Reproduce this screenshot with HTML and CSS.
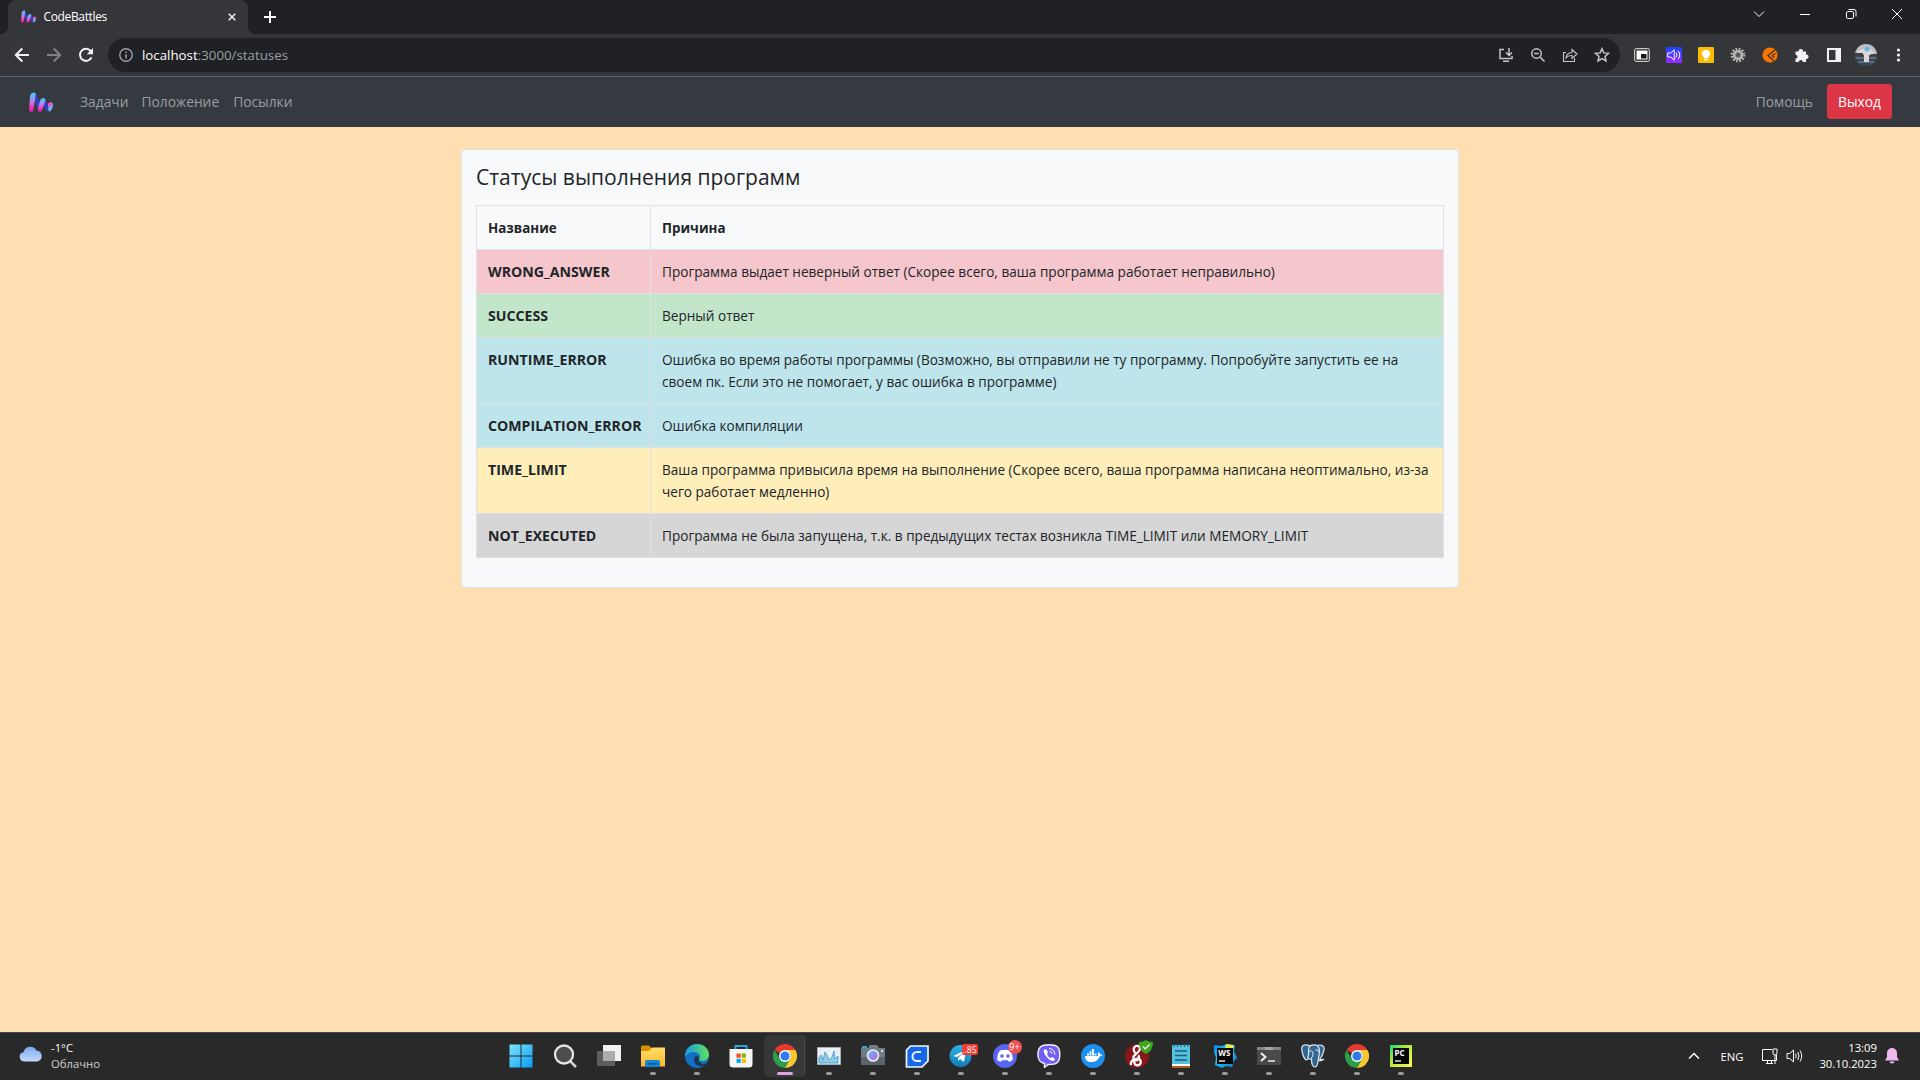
FILE: index.html
```html
<!DOCTYPE html>
<html lang="ru">
<head>
<meta charset="utf-8">
<title>CodeBattles</title>
<link rel="stylesheet" href="styles.css">
</head>
<body>
<svg class="defs" width="0" height="0">
  <defs>
    <linearGradient id="up" x1="0" y1="0" x2="0" y2="1"><stop offset="0" stop-color="#3fc6f5"/><stop offset=".5" stop-color="#c47fe0"/><stop offset=".85" stop-color="#ff1fb4"/></linearGradient>
    <linearGradient id="win" x1="0" y1="0" x2="1" y2="1"><stop offset="0" stop-color="#7be6ff"/><stop offset="1" stop-color="#0a9bf5"/></linearGradient>
    <linearGradient id="edge" x1="0" y1="0" x2="1" y2="0"><stop offset="0" stop-color="#1b9de2"/><stop offset="1" stop-color="#5fe05c"/></linearGradient>
    <linearGradient id="folder" x1="0" y1="0" x2="0" y2="1"><stop offset="0" stop-color="#ffdf6b"/><stop offset="1" stop-color="#fbb928"/></linearGradient>
    <linearGradient id="cloud" x1="0" y1="0" x2="0" y2="1"><stop offset="0" stop-color="#76a7f2"/><stop offset="1" stop-color="#c7dafa"/></linearGradient>
    <linearGradient id="lens" x1="0" y1="0" x2="1" y2="1"><stop offset="0" stop-color="#5ec3f5"/><stop offset="1" stop-color="#c65be8"/></linearGradient>
    <linearGradient id="tg" x1="0" y1="0" x2="0" y2="1"><stop offset="0" stop-color="#31b0e6"/><stop offset="1" stop-color="#127cb5"/></linearGradient>
    <linearGradient id="sound" x1="0" y1="0" x2="0" y2="1"><stop offset="0" stop-color="#1546ff"/><stop offset="1" stop-color="#9a2bff"/></linearGradient>
    <linearGradient id="ws" x1="0" y1="0" x2="1" y2="1"><stop offset="0" stop-color="#0a7ce8"/><stop offset=".35" stop-color="#18c8f0"/><stop offset="1" stop-color="#087ddb"/></linearGradient>
    <linearGradient id="pc" x1="0" y1="0" x2="1" y2="1"><stop offset="0" stop-color="#19d97c"/><stop offset=".4" stop-color="#b5e83c"/><stop offset="1" stop-color="#fcf84a"/></linearGradient>
    <symbol id="logo" viewBox="0 0 24 20">
      <path d="M5.500 3 10 15" stroke="#3440c4" stroke-width="4" stroke-linecap="round"/>
      <path d="M14.500 8 18.500 17" stroke="#3440c4" stroke-width="4" stroke-linecap="round"/>
      <path d="M4.800 0.400C2.500 0.600 1.300 2.200 1 4.600L.1 17.400c0 3 4 3 4.300 0L6.700 3.200C7 1.400 6.300.4 4.800.4Z" fill="url(#up)"/>
      <path d="M14.500 6c-2 .2-3.200 1.500-3.700 3.400L8.900 17c-.4 3 3.400 3.700 4.400.8L16.200 9c.5-1.700-.3-3-1.700-3Z" fill="url(#up)"/>
      <path d="M21.500 10.500c-1.700 0-2.500 1.300-2.500 3L19.500 19c1 .8 1.800.3 2.500-.5 1.600-1.800 2-4 2-6 0-1.400-1.200-2-2.500-2Z" fill="#69b4ee"/>
      <path d="M21.500 10.500c-1.700 0-2.500 1.300-2.500 3l.3 2.500 4.300-3.500c.2-1.400-.9-2-2.100-2Z" fill="#f04fc0"/>
    </symbol>
    <symbol id="chrome" viewBox="0 0 24 24">
      <path d="M12 12 1.600 6A12 12 0 0 1 22.400 6L12 6Z" fill="#e53a2e"/>
      <path d="M1.600 6A12 12 0 0 0 12 24l5.200-9L12 12 6.800 15Z" fill="#2b9e4a"/>
      <path d="M22.400 6A12 12 0 0 1 12 24l5.200-9A6 6 0 0 0 17.200 9L12 6Z" fill="#fcc72c"/>
      <circle cx="12" cy="12" r="6" fill="#fff"/><circle cx="12" cy="12" r="4.600" fill="#2f7de9"/>
    </symbol>
  </defs>
</svg>

<div class="tabstrip">
  <div class="tab">
    <svg class="favicon" width="15" height="13"><use href="#logo"/></svg>
    <span class="tab-title">CodeBattles</span>
    <svg width="8" height="8" viewBox="0 0 8 8"><path d="M.7.7 7.300 7.300M7.300.7.7 7.300" stroke="#e8eaed" stroke-width="1.600"/></svg>
  </div>
  <svg class="newtab" width="12" height="12" viewBox="0 0 12 12"><path d="M6 0v12M0 6h12" stroke="#fff" stroke-width="2"/></svg>
  <div class="window-controls">
    <svg viewBox="0 0 12 12"><path d="M1 3.500 6 8.500 11 3.500" class="thin"/></svg>
    <svg viewBox="0 0 12 12"><path d="M1 6.500h10" class="thin"/></svg>
    <svg viewBox="0 0 12 12"><rect x="1.500" y="3.500" width="7" height="7" rx="1.300" class="thin"/><path d="M3.500 1.500h5.500a2 2 0 0 1 2 2v5" class="thin"/></svg>
    <svg viewBox="0 0 12 12"><path d="M1 1 11 11M11 1 1 11" class="thin"/></svg>
  </div>
</div>

<div class="toolbar">
  <div class="nav-buttons">
    <svg viewBox="0 0 16 16"><path d="M15 8H2M8.300 1.500 1.800 8l6.500 6.500" class="arrow"/></svg>
    <svg viewBox="0 0 16 16"><path d="M1 8h13M7.700 1.500 14.200 8l-6.500 6.500" class="arrow off"/></svg>
    <svg viewBox="0 0 16 16"><path d="M13.500 10.300A6 6 0 1 1 12.600 4" class="arrow"/><path d="M15 1v6.200H8.800Z" fill="#f1f3f4"/></svg>
  </div>
  <div class="omnibox">
    <svg class="info" width="14" height="14" viewBox="0 0 14 14"><circle cx="7" cy="7" r="6.200" fill="none" stroke="#9aa0a6" stroke-width="1.400"/><path d="M7 6.200v4.300M7 3.500v1.500" stroke="#9aa0a6" stroke-width="1.500"/></svg>
    <span class="url"><b>localhost</b>:3000/statuses</span>
    <div class="omni-icons">
      <svg viewBox="0 0 16 16" class="line"><path d="M6 2.500H2v9h12V9M5 14.200h6M11 1v7M8 5.500l3 3 3-3"/></svg>
      <svg viewBox="0 0 16 16" class="line"><circle cx="6.500" cy="6.500" r="4.700"/><path d="m10 10 4.500 4.500M4.300 6.500h4.400"/></svg>
      <svg viewBox="0 0 16 16" class="line thinner"><path d="M4 5.500H1.500v9h11V11M4 11c.3-3.500 2.500-5.300 6-5.500V2.500l5 4.500-5 4.500V8.500C7.500 8.300 5.500 9 4 11Z"/></svg>
      <svg viewBox="0 0 16 16" class="line"><path d="m8 1.700 1.800 4.200 4.700.4-3.500 3.100 1 4.600L8 11.600 4 14l1-4.600L1.500 6.300l4.700-.4Z"/></svg>
    </div>
  </div>
  <div class="extensions">
    <svg viewBox="0 0 16 16"><rect x=".7" y="1.700" width="14.600" height="12.600" rx="1.500" fill="#222" stroke="#eee" stroke-width="1"/><rect x="2.500" y="3.500" width="11" height="9" fill="#fff"/><rect x="7" y="7" width="5.500" height="4.500" fill="#17181a"/></svg>
    <svg viewBox="0 0 16 16"><rect width="16" height="16" rx="1" fill="url(#sound)"/><path d="M1.700 6h3l3.500-3.200v10.400L4.700 10h-3ZM10 5.500q2 2.500 0 5M12 3.800q3.500 4.200 0 8.400" fill="none" stroke="#fff"/></svg>
    <svg viewBox="0 0 16 16"><rect width="16" height="16" rx="1.300" fill="#fbbc04"/><path d="M8 2.700a4 4 0 0 0-2.300 7.300v1.200h4.600V10A4 4 0 0 0 8 2.700ZM6 12h4v1.300H6Z" fill="#fff"/></svg>
    <svg viewBox="0 0 16 16"><circle cx="8" cy="8" r="6.300" fill="none" stroke="#bbb" stroke-width="2.200" stroke-dasharray="1.650 1.650"/><circle cx="8" cy="8" r="4" fill="#777" stroke="#b4b4b4" stroke-width="2.500"/><circle cx="8" cy="8" r="2" fill="#555"/></svg>
    <svg viewBox="0 0 16 16"><circle cx="8" cy="8" r="7.600" fill="#fb7400"/><path d="M13.500 2.500 6 8.500 12 14M10 8.500l3.500-2M10 8.500l2.300 2" fill="none" stroke="#3b302b" stroke-width="1.200"/></svg>
    <svg viewBox="0 0 16 16"><path d="M1.500 4.500h3.200a2.100 2.100 0 1 1 4.100 0H12v3.200a2.100 2.100 0 1 1 0 4.100V15H8.800a2 2 0 1 0-4 0H1.500v-3.300a2 2 0 1 0 0-4Z" fill="#f1f3f4"/></svg>
    <svg viewBox="0 0 16 16"><path d="M1 1h14v14H1ZM3 3v10h6.500V3Z" fill="#f1f3f4" fill-rule="evenodd"/></svg>
    <svg class="avatar" viewBox="0 0 22 22"><clipPath id="av"><circle cx="11" cy="11" r="11"/></clipPath><g clip-path="url(#av)"><path fill="#bfbfc1" d="M0 0h22v11H0z"/><path fill="#394758" d="M0 11h22v11H0z"/><path d="M0 14h22M0 18h22" stroke="#8992a5"/><path d="M3 7q8-5 16 1l-1 3-4-1v8H9v-8l-6-1Z" fill="#ded5dc"/><circle cx="12" cy="5" r="2.500" fill="#5db9e7"/><path d="M0 9h8v3H0ZM16 10h6v2h-6Z" fill="#443f43"/></g></svg>
    <svg viewBox="0 0 16 16" fill="#f1f3f4"><circle cx="8.500" cy="3" r="1.600"/><circle cx="8.500" cy="8" r="1.600"/><circle cx="8.500" cy="13" r="1.600"/></svg>
  </div>
</div>

<nav class="navbar">
  <svg class="brand" width="24" height="20"><use href="#logo"/></svg>
  <a class="nav-link tasks">Задачи</a>
  <a class="nav-link standings">Положение</a>
  <a class="nav-link submissions">Посылки</a>
  <a class="nav-link help">Помощь</a>
  <button class="logout">Выход</button>
</nav>

<main class="page">
  <section class="card">
    <h4>Статусы выполнения программ</h4>
    <table>
      <thead><tr><th>Название</th><th>Причина</th></tr></thead>
      <tbody>
        <tr class="danger"><th>WRONG_ANSWER</th><td>Программа выдает неверный ответ (Скорее всего, ваша программа работает неправильно)</td></tr>
        <tr class="success"><th>SUCCESS</th><td>Верный ответ</td></tr>
        <tr class="info-row"><th>RUNTIME_ERROR</th><td>Ошибка во время работы программы (Возможно, вы отправили не ту программу. Попробуйте запустить ее на своем пк. Если это не помогает, у вас ошибка в программе)</td></tr>
        <tr class="info-row"><th>COMPILATION_ERROR</th><td>Ошибка компиляции</td></tr>
        <tr class="warning"><th>TIME_LIMIT</th><td>Ваша программа привысила время на выполнение (Скорее всего, ваша программа написана неоптимально, из-за чего работает медленно)</td></tr>
        <tr class="secondary"><th>NOT_EXECUTED</th><td>Программа не была запущена, т.к. в предыдущих тестах возникла TIME_LIMIT или MEMORY_LIMIT</td></tr>
      </tbody>
    </table>
  </section>
</main>

<footer class="taskbar">
  <div class="weather">
    <svg width="24" height="16" viewBox="0 0 24 16"><path d="M5 15.500a4.700 4.700 0 0 1-.5-9.300A7 7 0 0 1 17.500 4.500a5.600 5.600 0 0 1 1 11Z" fill="url(#cloud)"/><path d="M7 7a6 6 0 0 1 7-1M16 6a5 5 0 0 0-4 4" stroke="#a8c5f5" fill="none"/></svg>
    <div class="weather-text"><span class="temp">-1°C</span><span class="cond">Облачно</span></div>
  </div>
  <div class="apps">
    <div class="app"><svg viewBox="0 0 24 24" fill="url(#win)"><path d="M.5.5h11v11H.5ZM12.500.5h11v11h-11ZM.5 12.500h11v11H.5ZM12.500 12.500h11v11h-11Z"/></svg></div>
    <div class="app"><svg viewBox="0 0 24 24"><path d="m17 17 6 6" stroke="#c9d0d6" stroke-width="2.500"/><circle cx="11" cy="10.500" r="9" fill="#4b4d4f" stroke="#e3e6e8" stroke-width="2.300"/></svg></div>
    <div class="app"><svg viewBox="0 0 24 24"><path fill="#5d5d5d" d="M0 7h18v15H0z"/><path fill="#f2f2f2" d="M6 1h18v16H6z"/><path fill="#acacac" d="M6 7h12v10H6z"/></svg></div>
    <div class="app running"><svg viewBox="0 0 24 24"><path d="M0 3q0-1.500 1.500-1.500H8l3 3V8H0Z" fill="#d99300"/><path d="M0 7h8l3-3.500h13v19H0Z" fill="url(#folder)"/><path d="M4 23v-5q0-2 2-2h11q2 0 2 2v5Z" fill="#1683d1"/><path d="M7 19h9v1.500H7z" fill="#075aa5"/></svg></div>
    <div class="app running"><svg viewBox="0 0 24 24"><circle cx="12" cy="12" r="12" fill="#116fc4"/><path d="M0 11C1 4 6 0 12 0c7 0 12 5 12 10.500 0 4-3 6.500-6.500 6.500-3 0-4-1.200-3.500-2 3-4-1-7-5-7-4 0-7 2-9 5Z" fill="url(#edge)"/><path d="M14 15c-1 4 5 7 8.500 3-4 6-11 5-13 0-1-3 0-6 2-6 1.500 0 3 1.500 2.500 3Z" fill="#1c3550"/></svg></div>
    <div class="app"><svg viewBox="0 0 24 24"><path d="M6.500 7V2h11v5" fill="none" stroke="#2ba4df" stroke-width="2"/><path d="M.5 5h23v15q0 3.500-3.500 3.500H4Q.5 23.500.5 20Z" fill="#f5f5f5"/><path d="M7.500 9.500h4.200v4.200H7.500z" fill="#f25022"/><path d="M12.700 9.500h4.200v4.200h-4.200z" fill="#7fba00"/><path d="M7.500 14.700h4.200v4.200H7.500z" fill="#00a4ef"/><path d="M12.700 14.700h4.200v4.200h-4.200z" fill="#ffb900"/></svg></div>
    <div class="app running active"><svg><use href="#chrome"/></svg></div>
    <div class="app running"><svg viewBox="0 0 24 24"><path d="M.5 3.500h23v17H.5z" fill="#e9eff3" stroke="#a6b0b6"/><path d="M2 19v-5l2-3 2 5 2-8 2 3 2 5 3-3 2-6 1 8 3-3v7Z" fill="#8fcbe8" stroke="#329bc9" stroke-width=".8"/></svg></div>
    <div class="app running"><svg viewBox="0 0 24 24"><path d="M1 4V2h5v2Z" fill="#28a8e0"/><path d="M0 4h7l2-3h7l2 3h6v17H0Z" fill="#727c85"/><path d="M0 13h24v8H0Z" fill="#59636c"/><circle cx="12" cy="11.500" r="6.300" fill="#eef1f4"/><circle cx="12" cy="11.500" r="4.700" fill="url(#lens)"/><path d="M20 6h2v2h-2z" fill="#dce5ea"/></svg></div>
    <div class="app running"><svg viewBox="0 0 24 24"><path d="M5.500 2h17.500v15l-6 6H1.500V6Z" fill="#1668e8" stroke="#f2f6ff" stroke-width="1.700"/><path d="M16 8h-4a4.500 4.500 0 0 0 0 9h4" fill="none" stroke="#e7f0ff" stroke-width="2"/></svg></div>
    <div class="app running"><svg viewBox="0 0 24 24"><circle cx="11.500" cy="12" r="11" fill="url(#tg)"/><path d="m4 12 13-6-2 12-4-3-2 2v-3l5-5-6 4Z" fill="#fff"/></svg><span class="badge square">..85</span></div>
    <div class="app running"><svg viewBox="0 0 24 24"><circle cx="12" cy="12" r="12" fill="#5865f2"/><path d="M7 6.500q5-1.500 10 0 3 4 2.700 9.500-2 1.500-4 1.700l-.8-1.500H9l-.8 1.500q-2-.2-4-1.700Q4 10.500 7 6.500Z" fill="#fff"/><circle cx="9" cy="12" r="1.800" fill="#5865f2"/><circle cx="15" cy="12" r="1.800" fill="#5865f2"/></svg><span class="badge round">9+</span></div>
    <div class="app running"><svg viewBox="0 0 24 24"><path d="M12 .8c8 0 10.800 2 10.800 10 0 7.500-2.800 9.700-10.800 9.700h-1L7.500 23.500v-4C2.500 18.500 1 16 1 10.500 1 3 4 .8 12 .8Z" fill="#7360f2" stroke="#eee" stroke-width="1.500"/><path d="M7.500 5.500c-3 1.500 3.500 11 8.500 11.500 1.500 0 2.500-2 1-3l-2-1-1.500 1c-1.500-.5-3-2.500-3.500-4l1-1.500-1.500-3Z" fill="#fff"/><path d="M12.500 7.300q2.500.3 2.700 2.700M12 4.500q5.500.5 6 6" fill="none" stroke="#fff"/></svg></div>
    <div class="app running"><svg viewBox="0 0 24 24"><circle cx="12" cy="12" r="12" fill="#1d8fee"/><path d="M4 12h13q.5-2-.3-3l1-1q1.300 1 1.300 2.500 1.500-.3 2.500.2-.8 1.700-3 1.700C17 17 13.500 18 10.500 18 6 18 4 16 4 12ZM6 9.500h2v2H6ZM8.500 9.500h2v2h-2ZM11 9.500h2v2h-2ZM13.500 9.500h2v2h-2ZM8.500 7.200h2v2h-2ZM11 7.200h2v2h-2ZM11 5h2v2h-2Z" fill="#fff"/></svg></div>
    <div class="app running"><svg viewBox="0 0 24 24"><circle cx="12" cy="12" r="12" fill="#88171a"/><path d="M10 9q-3-5 1-7 4-1 4 3-1 3-4 5-4 3-2 5c3 3 7-1 4-3.500M10 15q-5 2-4 6" fill="none" stroke="#fff" stroke-width="2.300"/><circle cx="12.500" cy="18" r="3.300" fill="none" stroke="#fff" stroke-width="2.300"/></svg><svg class="shield" viewBox="0 0 14 14"><path d="M7 0q3 2 7 2 0 9-7 12Q0 11 0 2q4 0 7-2Z" fill="#3da520"/><path d="m4 6.500 2.200 2.300L10.500 4.500" fill="none" stroke="#fff" stroke-width="1.200"/></svg></div>
    <div class="app running"><svg viewBox="0 0 24 24"><path d="M3 1h18v21H3z" fill="#56c0df"/><path d="M3 21h18v3H3z" fill="#b85b15"/><path d="M3 20h18v2H3z" fill="#fff"/><path d="M6 7h12M6 11.500h12M6 16h12" stroke="#145c78" stroke-width="1.600"/><path d="M5 0v3M8.500 0v3M12 0v3M15.500 0v3M19 0v3" stroke="#176585"/></svg></div>
    <div class="app running"><svg viewBox="0 0 24 24"><path d="M1 1 9 2 14 0l8 2-1 5 3 7-3 3-2 6-6-1-4 2-7-3 1-7-2-6Z" fill="url(#ws)"/><path d="m13 0 8 1-1 4H12Z" fill="#dff04b"/><path d="M4 4h16v16H4z" fill="#050505"/><path d="M6 17h6" stroke="#fff" stroke-width="1.300"/><text x="5.200" y="12" class="ide">WS</text></svg></div>
    <div class="app running"><svg viewBox="0 0 24 24"><path d="M0 3h24v18H0z" fill="#4a4a4a"/><path d="M0 3h24v3H0z" fill="#858585"/><path d="M8 3h8v3H8z" fill="#a7a7a7"/><path d="m4 9 4.500 4L4 17" stroke="#eee" stroke-width="2" fill="none"/><path d="M11 17h7" stroke="#eee" stroke-width="1.500"/></svg></div>
    <div class="app running"><svg viewBox="0 0 24 24"><path d="M9 2C5 0 0 0 .8 6c.6 5 3 10 4.700 10 1 0 2-2 2.500-2.500M15 2c4-2 9-1 8 4-.5 3-2.500 7-4 9 1 1 3 .7 4 0-1.500 2-4.500 2-5.500 1" fill="#336791" stroke="#e3e8ee" stroke-width="1.200"/><path d="M9 2c3-2 8-1.500 9 2 1 4 0 7-.5 10-.5 4-.5 9-3.500 9s-3.500-3-3.500-8c-4 1-4-2-3-4 .5-3-1-7 1.500-9Z" fill="#336791" stroke="#e3e8ee" stroke-width="1.200"/><path d="M8 8q3-3 4 1 .5 4-2 5M14.500 6q3-1 3 2" fill="none" stroke="#e3e8ee"/></svg></div>
    <div class="app running"><svg><use href="#chrome"/></svg></div>
    <div class="app running"><svg viewBox="0 0 24 24"><path d="M1 1h22v22H1z" fill="url(#pc)"/><path d="M4 4h16v16H4z" fill="#050505"/><path d="M6 17h6" stroke="#fff" stroke-width="1.300"/><text x="5.500" y="12" class="ide">PC</text></svg></div>
  </div>
  <div class="tray">
    <svg class="chev" width="12" height="8" viewBox="0 0 12 8"><path d="M1 6.500 6 1.500 11 6.500" fill="none" stroke="#fff" stroke-width="1.500"/></svg>
    <span class="lang">ENG</span>
    <svg class="net" width="17" height="17" viewBox="0 0 17 17"><path d="M11 1.500H1.500v11h14V7M5 15.500h7M6.500 12.500v3M10.500 12.500v3M12 1h4v4q0 2-2 2t-2-2ZM14 7v9" class="thin"/></svg>
    <svg class="vol" width="17" height="14" viewBox="0 0 17 14"><path d="M1 4.500h2.700L7.500 1v12L3.700 9.500H1ZM9.500 4.700q1.500 2.300 0 4.600M11.700 3q2.700 4 0 8M14 1.500q3.500 5.500 0 11" class="thin"/></svg>
    <div class="clock"><span class="time">13:09</span><span class="date">30.10.2023</span></div>
    <svg class="bell" width="14" height="16" viewBox="0 0 14 16"><path d="M7 0a5 5 0 0 1 5 5v4l2 3.500H0L2 9V5a5 5 0 0 1 5-5ZM4.500 13.500h5a2.500 2 0 0 1-5 0Z" fill="#efb9f0"/></svg>
  </div>
</footer>
</body>
</html>
```
FILE: styles.css
```css
* { box-sizing: border-box; }
body {
  margin: 0;
  width: 1920px;
  height: 1080px;
  overflow: hidden;
  display: flex;
  flex-direction: column;
  background: #ffdfb1;
  font-family: "Open Sans", "Noto Sans", sans-serif;
  color: #212529;
}
svg { display: block; flex: none; }
.defs { position: absolute; }
.thin { fill: none; stroke: #fff; stroke-width: 1; }

/* browser chrome */
.tabstrip { height: 34px; flex: none; display: flex; align-items: flex-start; background: #202124; padding-left: 8px; }
.tab { width: 240px; height: 34px; background: #35363a; border-radius: 8px 8px 0 0; display: flex; align-items: center; padding: 0 12.500px 1px; position: relative; }
.tab::before, .tab::after { content: ""; position: absolute; bottom: 0; width: 8px; height: 8px; }
.tab::before { left: -8px; background: radial-gradient(circle at 0 0, #202124 8px, #35363a 8.500px); }
.tab::after { right: -8px; background: radial-gradient(circle at 100% 0, #202124 8px, #35363a 8.500px); }
.tab-title { color: #fff; font-size: 12px; flex: 1; margin-left: 8px; letter-spacing: -.35px; }
.newtab { margin: 11px 0 0 16px; }
.window-controls { display: flex; margin-left: auto; padding: 8px 0 0; }
.window-controls svg { width: 12px; height: 12px; margin: 0 17px; }
.toolbar { height: 43px; flex: none; display: flex; align-items: center; background: #35363a; border-bottom: 1px solid #606164; }
.nav-buttons { display: flex; gap: 16px; padding-left: 14px; width: 108px; }
.nav-buttons svg { width: 16px; height: 16px; }
.arrow { fill: none; stroke: #f1f3f4; stroke-width: 2; }
.arrow.off { stroke: #818286; }
.omnibox { width: 1512px; height: 34px; border-radius: 17px; background: #202124; display: flex; align-items: center; padding-left: 11px; }
.url { color: #9aa0a6; font-size: 13.300px; margin-left: 9px; }
.url b { color: #fff; font-weight: 400; }
.omni-icons { display: flex; gap: 16px; margin-left: auto; padding-right: 10px; }
.omni-icons svg { width: 16px; height: 16px; }
.line { fill: none; stroke: #c4c6c9; stroke-width: 1.500; }
.thinner { stroke-width: 1.100; }
.extensions { display: flex; align-items: center; gap: 16px; padding-left: 14px; }
.extensions svg { width: 16px; height: 16px; }
.extensions .avatar { width: 22px; height: 22px; margin: 0 -3px; }

/* site navbar */
.navbar { height: 50px; flex: none; display: flex; align-items: center; background: #343a40; padding: 0 28px 1px 29px; font-size: 13.800px; }
.nav-link { color: #9a9da0; margin-right: 14px; }
.nav-link.tasks { margin: 0 13px 0 27px; }
.nav-link.help { margin-left: auto; }
.logout { width: 65px; height: 35px; border: 0; padding: 0; border-radius: 3.500px; background: #dc3545; color: #fff; font: inherit; }

/* statuses card */
.page { flex: 1; min-height: 0; padding-top: 22px; }
.card { width: 998px; height: 439px; margin: 0 0 0 461px; background: #f8f9fa; border: 1px solid #dee2e6; border-radius: 4px; padding: 12.500px 14px; }
h4 { margin: 0; height: 42px; line-height: 28px; font-size: 21px; font-weight: 500; }
table { width: 968px; border-collapse: collapse; font-size: 13.600px; line-height: 22px; table-layout: fixed; }
th, td { border: 1px solid #dee2e6; padding: 11px 11px 10px; text-align: left; vertical-align: top; }
th:first-child { width: 174px; }
tbody th { font-size: 14.150px; }
thead th { font-size: 13.400px; }
.danger { background: #f5c6cb; }
.success { background: #c3e6cb; }
.info-row { background: #bee5eb; }
.warning { background: #ffeeba; }
.secondary { background: #d6d6d6; }

/* taskbar */
.taskbar { height: 48px; flex: none; display: flex; align-items: center; background: #292929; border-top: 1px solid #474747; color: #fff; font-size: 11.300px; }
.weather { display: flex; align-items: center; width: 498.500px; padding: 0 0 1px 19px; gap: 8px; }
.weather > svg { margin-top: -4px; }
.weather-text, .clock { display: flex; flex-direction: column; line-height: 16px; }
.cond { color: #cfcfcf; }
.apps { display: flex; }
.app { width: 44px; height: 47px; padding-bottom: 1px; position: relative; display: flex; align-items: center; justify-content: center; }
.app > svg { width: 24px; height: 24px; }
.running::after { content: ""; position: absolute; left: 19px; bottom: 5px; width: 6px; height: 3px; border-radius: 2px; background: #9a9a9a; }
.active::before { content: ""; position: absolute; left: 2px; top: 3px; width: 39px; height: 40px; border-radius: 4px; background: #373737; border-right: 1px solid #474747; box-shadow: 0 0 0 .5px #444; }
.active > svg { position: relative; }
.active::after { left: 14px; width: 16px; background: #dfa3e2; }
.badge { position: absolute; color: #fff; text-align: center; }
.square { left: 23px; top: 11px; width: 16px; height: 11px; background: #f23c34; border-radius: 2px; font-size: 8.500px; line-height: 11px; }
.round { left: 25px; top: 7px; width: 14px; height: 14px; border-radius: 50%; background: #ed4f50; font-size: 9.500px; line-height: 14px; }
.app > .shield { position: absolute; width: 14px; height: 14px; left: 24px; top: 7px; }
.ide { font: 700 8px "Open Sans", sans-serif; fill: #fff; }
.tray { display: flex; align-items: center; margin-left: auto; padding: 0 21px 1px 0; }
.lang { margin-left: 20px; }
.net { margin-left: 18px; }
.vol { margin-left: 8px; }
.clock { margin-left: 16px; align-items: flex-end; }
.bell { margin-left: 8px; }
```
